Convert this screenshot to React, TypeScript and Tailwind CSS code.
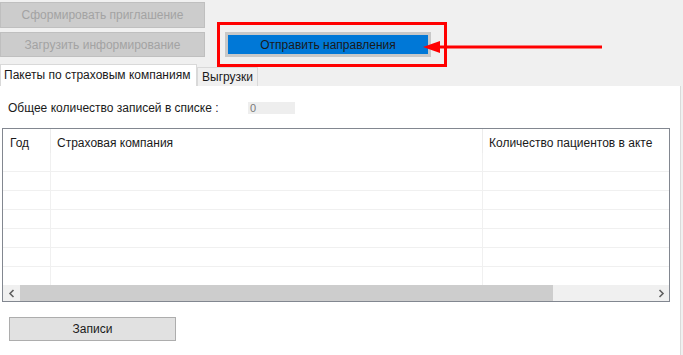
import React from "react";

const rows = [0, 1, 2, 3, 4, 5, 6];

function Chevron({ dir }: { dir: "left" | "right" }) {
  return (
    <svg width="8" height="9" viewBox="0 0 8 9" className="shrink-0">
      {dir === "left" ? (
        <path d="M5.5 1 L2 4.5 L5.5 8" fill="none" stroke="#606060" strokeWidth="1.6" />
      ) : (
        <path d="M2.5 1 L6 4.5 L2.5 8" fill="none" stroke="#606060" strokeWidth="1.6" />
      )}
    </svg>
  );
}

export default function App() {
  const disabledBtn =
    "w-[205px] flex items-center justify-center bg-[#cccccc] border border-[#bfbfbf] text-[#a3a3a3]";

  return (
    <div className="relative w-[683px] h-[355px] overflow-hidden whitespace-nowrap bg-[#f0f0f0] text-[12px] text-[#1a1a1a] font-['Liberation_Sans',Arial,sans-serif]">
      {/* top buttons */}
      <div className="h-[64px] flex">
        <div className="flex flex-col gap-[4px] pt-[2px]">
          <div className={`${disabledBtn} h-[26px]`}>Сформировать приглашение</div>
          <div className={`${disabledBtn} h-[25px]`}>Загрузить информирование</div>
        </div>
        <div className="ml-[20px] mt-[32px]">
          <div className="w-[206px] h-[25px] border-[3px] border-[#c8c8c8] bg-[#0078d7] flex items-center justify-center text-[#1a1a1a]">
            Отправить направления
          </div>
        </div>
      </div>

      {/* tabs */}
      <div className="flex items-end h-[22px]">
        <div className="w-[197px] h-[22px] bg-white border-t border-l border-r border-[#d9d9d9] flex items-center pl-[3px] pb-[2px]">
          Пакеты по страховым компаниям
        </div>
        <div className="w-[61px] h-[19px] bg-[#f0f0f0] border border-b-0 border-[#d9d9d9] flex items-center justify-center">
          Выгрузки
        </div>
      </div>

      {/* tab page */}
      <div className="w-[681px] h-[269px] bg-white border-r border-[#dadada] flex flex-col">
        <div className="flex items-center h-[16px] mt-[14px]">
          <span className="ml-[8px] w-[240px]">Общее количество записей в списке :</span>
          <div className="w-[47px] h-[12px] bg-[#eeeeee] text-[#7a7a7a] flex items-center pl-[2px] text-[11px] leading-none">
            0
          </div>
        </div>

        {/* grid */}
        <div className="mt-[12px] ml-[2px] w-[668px] h-[174px] border border-[#828790] flex flex-col">
          <div className="flex-1 overflow-hidden">
            <div className="flex h-[24px]">
              <div className="w-[48px] pl-[7px] pt-[3px] flex items-center border-r border-[#ececec]">Год</div>
              <div className="w-[432px] pl-[6px] pt-[3px] flex items-center border-r border-[#ececec]">Страховая компания</div>
              <div className="flex-1 pl-[6px] pt-[3px] flex items-center">Количество пациентов в акте</div>
            </div>
            {rows.map((r) => (
              <div key={r} className="flex h-[19px] border-b border-[#f0f0f0]">
                <div className="w-[48px] border-r border-[#f0f0f0]" />
                <div className="w-[432px] border-r border-[#f0f0f0]" />
                <div className="flex-1" />
              </div>
            ))}
          </div>
          <div className="h-[16px] bg-[#f0f0f0] flex items-center">
            <div className="w-[17px] flex justify-center">
              <Chevron dir="left" />
            </div>
            <div className="w-[533px] h-full bg-[#cdcdcd]" />
            <div className="flex-1" />
            <div className="w-[17px] flex justify-center">
              <Chevron dir="right" />
            </div>
          </div>
        </div>

        <div className="mt-[15px] ml-[9px] w-[167px] h-[24px] bg-[#e1e1e1] border border-[#adadad] flex items-center justify-center">
          Записи
        </div>
      </div>

      {/* annotation: red frame and arrow */}
      <div className="absolute left-[217px] top-[22px] w-[230px] h-[45px] border-[3px] border-[#ff0000]" />
      <svg className="absolute left-[418px] top-[38px]" width="190" height="20" viewBox="0 0 190 20">
        <line x1="18" y1="9" x2="184" y2="9" stroke="#ff0000" strokeWidth="3" />
        <polygon points="5,9 22,3 22,15" fill="#ff0000" />
      </svg>
    </div>
  );
}
